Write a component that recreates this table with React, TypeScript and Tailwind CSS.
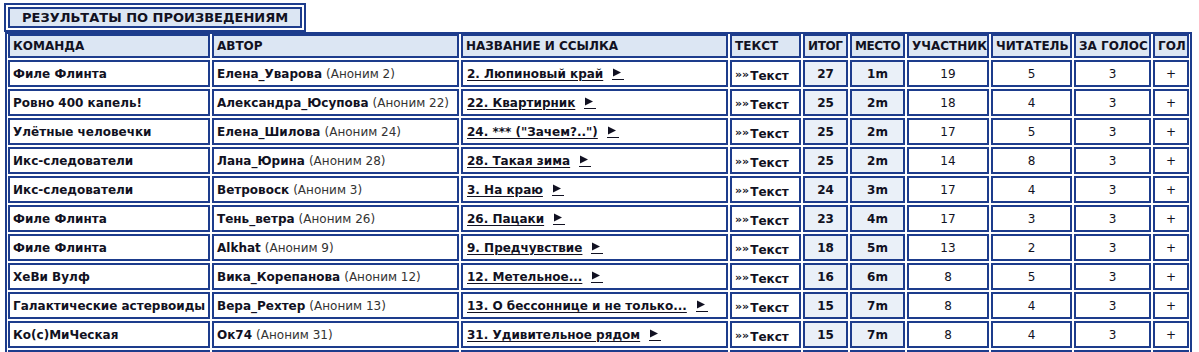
import React from 'react';

type Row = {
  team: string;
  author: string;
  anon: string;
  title: string;
  total: number;
  place: string;
  part: number;
  reader: number;
  vote: number;
};

const rows: Row[] = [
  { team: 'Филе Флинта', author: 'Елена_Уварова', anon: '(Аноним 2)', title: '2. Люпиновый край', total: 27, place: '1m', part: 19, reader: 5, vote: 3 },
  { team: 'Ровно 400 капель!', author: 'Александра_Юсупова', anon: '(Аноним 22)', title: '22. Квартирник', total: 25, place: '2m', part: 18, reader: 4, vote: 3 },
  { team: 'Улётные человечки', author: 'Елена_Шилова', anon: '(Аноним 24)', title: '24. *** ("Зачем?..")', total: 25, place: '2m', part: 17, reader: 5, vote: 3 },
  { team: 'Икс-следователи', author: 'Лана_Юрина', anon: '(Аноним 28)', title: '28. Такая зима', total: 25, place: '2m', part: 14, reader: 8, vote: 3 },
  { team: 'Икс-следователи', author: 'Ветровоск', anon: '(Аноним 3)', title: '3. На краю', total: 24, place: '3m', part: 17, reader: 4, vote: 3 },
  { team: 'Филе Флинта', author: 'Тень_ветра', anon: '(Аноним 26)', title: '26. Пацаки', total: 23, place: '4m', part: 17, reader: 3, vote: 3 },
  { team: 'Филе Флинта', author: 'Alkhat', anon: '(Аноним 9)', title: '9. Предчувствие', total: 18, place: '5m', part: 13, reader: 2, vote: 3 },
  { team: 'ХеВи Вулф', author: 'Вика_Корепанова', anon: '(Аноним 12)', title: '12. Метельное...', total: 16, place: '6m', part: 8, reader: 5, vote: 3 },
  { team: 'Галактические астервоиды', author: 'Вера_Рехтер', anon: '(Аноним 13)', title: '13. О бессоннице и не только...', total: 15, place: '7m', part: 8, reader: 4, vote: 3 },
  { team: 'Ко(с)МиЧеская', author: 'Ок74', anon: '(Аноним 31)', title: '31. Удивительное рядом', total: 15, place: '7m', part: 8, reader: 4, vote: 3 },
];

const headers = ['КОМАНДА', 'АВТОР', 'НАЗВАНИЕ И ССЫЛКА', 'ТЕКСТ', 'ИТОГ', 'МЕСТО', 'УЧАСТНИК', 'ЧИТАТЕЛЬ', 'ЗА ГОЛОС', 'ГОЛ'];

function Cell({ className = '', children }: { className?: string; children?: React.ReactNode }) {
  return (
    <div className={`border-2 border-[#1d3c8c] flex items-center whitespace-nowrap overflow-hidden ${className}`}>
      {children}
    </div>
  );
}

// стрелка "слушать" с подчёркиванием
function PlayArrow() {
  return (
    <span className="ml-[9px] inline-flex flex-col items-start mt-[1px]">
      <svg width="10" height="9" viewBox="0 0 10 9">
        <path d="M1 0.5 L9 4.5 L1 8.5 Z" fill="#111122" />
      </svg>
      <span className="w-[12px] h-[1px] bg-[#111122] mt-[2px]" />
    </span>
  );
}

export default function App() {
  return (
    <div className="bg-white w-[1199px] h-[352px] overflow-hidden font-['DejaVu_Sans',sans-serif] text-[12px] text-[#111122]">
      {/* Заголовок */}
      <div className="ml-[4px] mt-[3px] w-[302px] h-[29px] border-2 border-[#1d3c8c] p-[2px]">
        <div className="h-full border-2 border-[#1d3c8c] bg-[#dce6f3] flex items-center pl-[12px] font-bold text-[13px]">
          РЕЗУЛЬТАТЫ ПО ПРОИЗВЕДЕНИЯМ
        </div>
      </div>

      {/* Таблица */}
      <div className="ml-[5px] w-[1187px] border-2 border-[#1d3c8c] px-[1px]">
        <div className="grid grid-cols-[202px_247px_267px_71px_45px_55px_82px_81px_77px_36px] gap-[2px] auto-rows-[27px] grid-rows-[24px]">
          {headers.map((h) => (
            <Cell
              key={h}
              className={`bg-[#dce6f3] font-bold pl-[3px] ${h === 'МЕСТО' || h === 'ИТОГ' ? 'tracking-[-0.4px]' : ''}`}
            >
              {h}
            </Cell>
          ))}
          {rows.map((r, i) => (
            <React.Fragment key={i}>
              <Cell className="font-bold pl-[3px]">{r.team}</Cell>
              <Cell className="pl-[3px]">
                <span className="font-bold">{r.author}</span>
                <span className="ml-[4px] text-[#333]">{r.anon}</span>
              </Cell>
              <Cell className="pl-[4px] font-bold">
                <span className="underline underline-offset-2">{r.title}</span>
                <PlayArrow />
              </Cell>
              <Cell className="pl-[3px] pt-[4px] font-bold">
                <span className="text-[11px] mr-[1px]">»»</span>Текст
              </Cell>
              <Cell className="justify-center font-bold bg-[#eaf0f8]">{r.total}</Cell>
              <Cell className="justify-center font-bold bg-[#eaf0f8]">{r.place}</Cell>
              <Cell className="justify-center">{r.part}</Cell>
              <Cell className="justify-center">{r.reader}</Cell>
              <Cell className="justify-center">{r.vote}</Cell>
              <Cell className="justify-center">+</Cell>
            </React.Fragment>
          ))}
          {/* следующая строка, видна только верхняя граница */}
          <Cell />
          <Cell />
          <Cell />
          <Cell />
          <Cell className="bg-[#eaf0f8]" />
          <Cell className="bg-[#eaf0f8]" />
          <Cell />
          <Cell />
          <Cell />
          <Cell />
        </div>
      </div>
    </div>
  );
}
